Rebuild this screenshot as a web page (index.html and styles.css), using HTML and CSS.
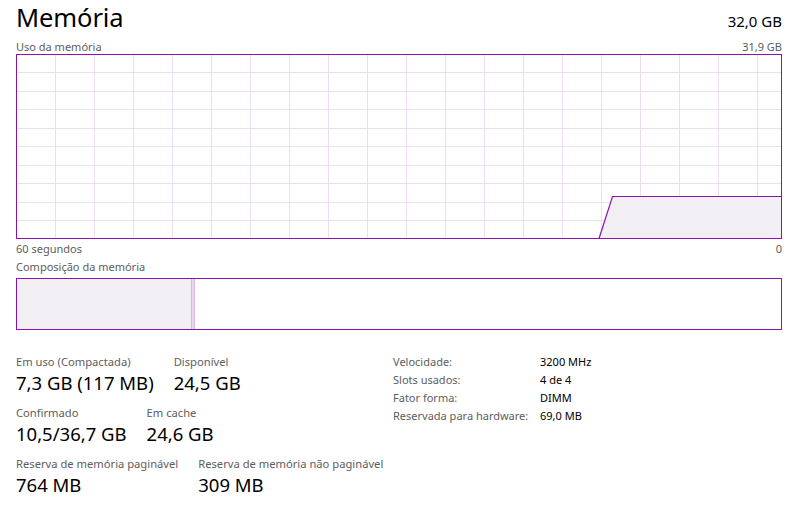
FILE: index.html
```html
<!DOCTYPE html>
<html lang="pt">
<head>
<meta charset="utf-8">
<title>Memória</title>
<link rel="stylesheet" href="styles.css">
</head>
<body>
<div class="panel">
  <div class="header">
    <h1 class="title">Memória</h1>
    <div class="total">32,0 GB</div>
  </div>
  <div class="caption-row">
    <span>Uso da memória</span>
    <span>31,9 GB</span>
  </div>
  <svg class="graph" width="766" height="185" viewBox="0 0 766 185">
    <g class="grid">
      <line x1="39.5" y1="0" x2="39.5" y2="185"/>
      <line x1="78.5" y1="0" x2="78.5" y2="185"/>
      <line x1="117.5" y1="0" x2="117.5" y2="185"/>
      <line x1="156.5" y1="0" x2="156.5" y2="185"/>
      <line x1="195.5" y1="0" x2="195.5" y2="185"/>
      <line x1="234.5" y1="0" x2="234.5" y2="185"/>
      <line x1="273.5" y1="0" x2="273.5" y2="185"/>
      <line x1="312.5" y1="0" x2="312.5" y2="185"/>
      <line x1="351.5" y1="0" x2="351.5" y2="185"/>
      <line x1="390.5" y1="0" x2="390.5" y2="185"/>
      <line x1="429.5" y1="0" x2="429.5" y2="185"/>
      <line x1="468.5" y1="0" x2="468.5" y2="185"/>
      <line x1="507.5" y1="0" x2="507.5" y2="185"/>
      <line x1="546.5" y1="0" x2="546.5" y2="185"/>
      <line x1="585.5" y1="0" x2="585.5" y2="185"/>
      <line x1="624.5" y1="0" x2="624.5" y2="185"/>
      <line x1="663.5" y1="0" x2="663.5" y2="185"/>
      <line x1="702.5" y1="0" x2="702.5" y2="185"/>
      <line x1="741.5" y1="0" x2="741.5" y2="185"/>
      <line x1="0" y1="18.5" x2="766" y2="18.5"/>
      <line x1="0" y1="37.5" x2="766" y2="37.5"/>
      <line x1="0" y1="55.5" x2="766" y2="55.5"/>
      <line x1="0" y1="74.5" x2="766" y2="74.5"/>
      <line x1="0" y1="92.5" x2="766" y2="92.5"/>
      <line x1="0" y1="111.5" x2="766" y2="111.5"/>
      <line x1="0" y1="129.5" x2="766" y2="129.5"/>
      <line x1="0" y1="148.5" x2="766" y2="148.5"/>
      <line x1="0" y1="166.5" x2="766" y2="166.5"/>
    </g>
    <polygon class="area" points="583,184.5 596.5,142.5 765.5,142.5 765.5,184.5"/>
    <polyline class="usage" points="583,184.5 596.5,142.5 765.5,142.5"/>
    <rect class="frame" x="0.5" y="0.5" width="765" height="184"/>
  </svg>
  <div class="caption-row axis">
    <span>60 segundos</span>
    <span>0</span>
  </div>
  <div class="caption-row comp-label">
    <span>Composição da memória</span>
  </div>
  <div class="composition">
    <div class="seg-inuse"></div>
    <div class="seg-modified"></div>
    <div class="seg-free"></div>
  </div>
  <div class="stats">
    <div class="stats-left">
      <div class="stat-row">
        <div class="stat"><div class="label">Em uso (Compactada)</div><div class="value">7,3 GB (117 MB)</div></div>
        <div class="stat"><div class="label">Disponível</div><div class="value">24,5 GB</div></div>
      </div>
      <div class="stat-row">
        <div class="stat"><div class="label">Confirmado</div><div class="value">10,5/36,7 GB</div></div>
        <div class="stat"><div class="label">Em cache</div><div class="value">24,6 GB</div></div>
      </div>
      <div class="stat-row">
        <div class="stat"><div class="label">Reserva de memória paginável</div><div class="value">764 MB</div></div>
        <div class="stat"><div class="label">Reserva de memória não paginável</div><div class="value">309 MB</div></div>
      </div>
    </div>
    <dl class="specs">
      <dt>Velocidade:</dt><dd>3200 MHz</dd>
      <dt>Slots usados:</dt><dd>4 de 4</dd>
      <dt>Fator forma:</dt><dd>DIMM</dd>
      <dt>Reservada para hardware:</dt><dd>69,0 MB</dd>
    </dl>
  </div>
</div>
</body>
</html>
```

FILE: styles.css
```css
html, body {
  margin: 0;
  padding: 0;
  background: #ffffff;
}

body {
  font-family: "Noto Sans", "Open Sans", sans-serif;
  color: #000000;
}

.panel {
  width: 766px;
  padding: 0 13px 0 16px;
}

.header {
  display: flex;
  justify-content: space-between;
  align-items: baseline;
  height: 34px;
}

.title {
  margin: 0;
  font-weight: 400;
  font-size: 25.5px;
  line-height: 34px;
  letter-spacing: -0.1px;
}

.total {
  font-size: 15px;
  line-height: 34px;
}

.caption-row {
  display: flex;
  justify-content: space-between;
  font-size: 11px;
  color: #5d5d5d;
  line-height: 15px;
  height: 20px;
  align-items: flex-end;
}

.graph {
  display: block;
}

.grid line {
  stroke: #ecdef1;
  stroke-width: 1;
}

.area {
  fill: #f2eff4;
  stroke: none;
}

.usage {
  fill: none;
  stroke: #8b12ae;
  stroke-width: 1.2;
}

.frame {
  fill: none;
  stroke: #8b12ae;
  stroke-width: 1;
}

.caption-row.axis {
  height: 17px;
}

.caption-row.comp-label {
  height: 18px;
}

.composition {
  display: flex;
  height: 50px;
  border: 1px solid #8b12ae;
  margin-top: 4px;
}

.seg-inuse {
  width: 174px;
  background: #f2eff4;
}

.seg-modified {
  width: 2px;
  background: #e8d8ee;
  border-left: 1px solid #d6b8df;
  border-right: 1px solid #d6b8df;
}

.seg-free {
  flex: 1;
  background: #ffffff;
}

.stats {
  display: flex;
  margin-top: 23px;
}

.stats-left {
  width: 377px;
  display: flex;
  flex-direction: column;
}

.stat-row {
  display: flex;
  gap: 20px;
  height: 51px;
}

.stat {
  white-space: nowrap;
}

.label {
  font-size: 11.2px;
  color: #5d5d5d;
  line-height: 17px;
}

.value {
  font-size: 18.5px;
  line-height: 25px;
}

.specs {
  margin: 0;
  display: grid;
  grid-template-columns: 147px auto;
  grid-auto-rows: 18px;
  font-size: 11px;
  line-height: 18px;
  white-space: nowrap;
}

.specs dt {
  color: #5d5d5d;
}

.specs dd {
  margin: 0;
  color: #000000;
}
```
